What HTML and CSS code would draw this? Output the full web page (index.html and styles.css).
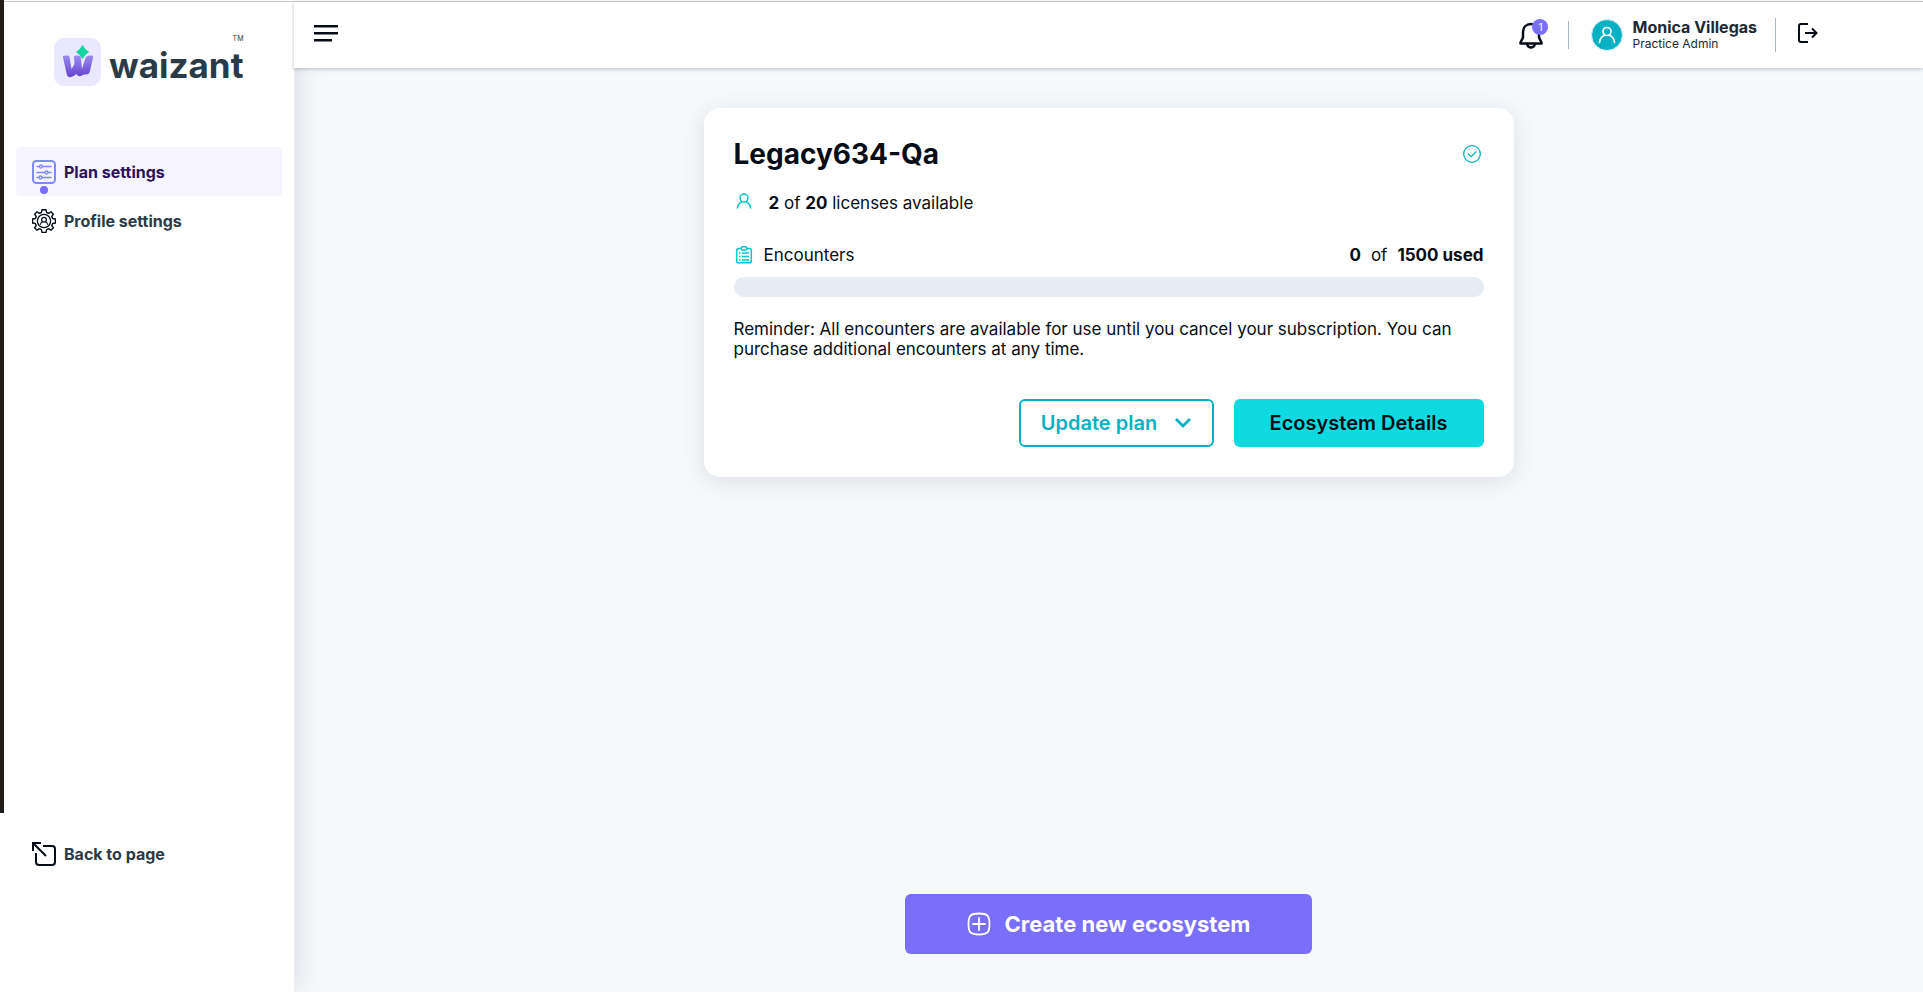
FILE: index.html
```html
<!DOCTYPE html>
<html lang="en">
<head>
<meta charset="utf-8">
<meta name="viewport" content="width=device-width, initial-scale=1">
<title>Waizant - Plan settings</title>
<link rel="stylesheet" href="styles.css">
</head>
<body>
<div class="edge"></div>
<div class="app">
  <aside class="sidebar">
    <a class="logo" href="#" aria-label="Waizant home">
      <svg class="logo-mark" viewBox="0 0 47 48" aria-hidden="true">
        <defs><linearGradient id="w" x1="0" y1="0" x2="0" y2="1"><stop offset="0" stop-color="#9b8af0"/><stop offset="1" stop-color="#6543cf"/></linearGradient></defs>
        <rect width="47" height="48" rx="10" fill="#e9e8ff"/>
        <path d="M9 19.500Q8.500 17.800 10 17.800L14 17.500Q15.300 17.500 15.500 19L17.500 31L20.500 26L20 19Q20.200 17.500 22 17.500L25 17.500Q26.500 17.500 26.700 19L28 31L31.500 20Q32.500 17.500 35 17.500L38 17.500Q39.500 17.500 39 19.500L36 33Q35 37 31.500 36.500Q29.500 36 28 37.500Q24 39.500 22.500 36Q18 40 15 39Q13 38.500 12.500 35Z" fill="url(#w)"/>
        <path d="M28.500 7.500Q30.500 12 34.500 14Q30.500 16 28.500 20.500Q26.500 16 22.500 14Q26.500 12 28.500 7.500Z" fill="#14d5a4" stroke="#14d5a4" stroke-width="1"/>
      </svg>
      <span class="wordmark">waizant</span>
      <span class="tm">TM</span>
    </a>
    <nav class="nav">
      <a class="nav-item active" href="#">
        <span class="nav-icon">
          <svg viewBox="0 0 24 24" fill="none" stroke="#7c8cff" aria-hidden="true">
            <rect x="1" y="1" width="22" height="22" rx="3.500" stroke-width="2"/>
            <path d="M5 6.500H7.500M10.500 6.500H19M5 12.500H13M16 12.500H19M5 17.500H7M10 17.500H19" stroke-width="1.500" stroke-linecap="round"/>
            <circle cx="9" cy="6.500" r="1.500" stroke-width="1.300"/><circle cx="14.500" cy="12.500" r="1.500" stroke-width="1.300"/><circle cx="8.500" cy="17.500" r="1.500" stroke-width="1.300"/>
          </svg>
          <span class="nav-dot"></span>
        </span>
        Plan settings
      </a>
      <a class="nav-item" href="#">
        <span class="nav-icon">
          <svg viewBox="0 0 24 24" fill="none" stroke="#060d17" aria-hidden="true">
            <path d="M10 .7H14L14.600 3.500L16.700 4.400L19 2.800L21.400 5.200L19.800 7.500L20.600 9.500L23.400 10V14L20.600 14.500L19.800 16.500L21.400 18.800L19 21.200L16.700 19.700L14.600 20.600L14 23.400H10L9.400 20.600L7.300 19.700L5 21.200L2.600 18.800L4.200 16.500L3.400 14.500L.6 14V10L3.400 9.500L4.200 7.500L2.600 5.200L5 2.800L7.300 4.400L9.400 3.500Z" stroke-width="1.400" stroke-linejoin="round"/>
            <circle cx="12" cy="12" r="6.600" stroke-width="1.300"/>
            <circle cx="12" cy="10.700" r="2.400" stroke-width="1.200"/><path d="M8.400 15.800Q8.600 13.400 10.600 12.800M15.600 15.800Q15.400 13.400 13.400 12.800" stroke-width="1.200"/>
          </svg>
        </span>
        Profile settings
      </a>
    </nav>
    <a class="nav-item back" href="#">
      <span class="nav-icon">
        <svg viewBox="0 0 24 24" fill="none" stroke="#060d17" stroke-width="2" aria-hidden="true">
          <path d="M1 9V1H9M1 1L14 14"/>
          <path d="M11 4H20Q23 4 23 7V20Q23 23 20 23H7Q4 23 4 20V11"/>
        </svg>
      </span>
      Back to page
    </a>
  </aside>

  <div class="content">
    <header class="topbar">
      <button class="icon-button raised" type="button" aria-label="Toggle menu">
        <svg class="menu-icon" viewBox="0 0 24 17" fill="#060d17" aria-hidden="true"><path d="M0 0H24V2.600H0ZM0 7H24V9.600H0ZM0 14H18V16.600H0Z"/></svg>
      </button>
      <div class="account">
        <button class="icon-button bell" type="button" aria-label="Notifications, 1 new">
          <svg viewBox="0 0 24 27" fill="none" stroke="#060d17" stroke-width="2.500" stroke-linejoin="round" aria-hidden="true">
            <path d="M12 2C7 2 4 5.500 4 10V15.500L1.500 20.500V21.500H22.500V20.500L20 15.500V10C20 5.500 17 2 12 2Z"/><path d="M8 22Q9 25.500 12 25.500Q15 25.500 16 22"/>
          </svg>
          <span class="badge">1</span>
        </button>
        <span class="divider"></span>
        <span class="avatar">
          <svg viewBox="0 0 18 18" fill="none" stroke="#fff" stroke-width="1.700" stroke-linecap="round" aria-hidden="true"><circle cx="9" cy="5.500" r="4"/><path d="M1.500 16.500Q2 11 6.500 9.200M16.500 16.500Q16 11 11.500 9.200"/></svg>
        </span>
        <div class="user"><span class="user-name">Monica Villegas</span><span class="user-role">Practice Admin</span></div>
        <span class="divider tall"></span>
        <button class="icon-button raised" type="button" aria-label="Log out">
          <svg class="logout-icon" viewBox="0 0 20 20" fill="none" stroke="#060d17" stroke-width="2" aria-hidden="true"><path d="M10 1H3Q1 1 1 3V17Q1 19 3 19H10M7 10H18.500M14 5.500L18.500 10L14 14.500"/></svg>
        </button>
      </div>
    </header>

    <main class="main">
      <section class="card">
        <div class="card-head">
          <h1>Legacy634-Qa</h1>
          <svg class="check" viewBox="0 0 18 18" fill="none" stroke="#07b0c2" stroke-width="1.300" aria-hidden="true"><circle cx="9" cy="9" r="8.300"/><path d="M5.300 9L8.200 11.700L13 6.700" stroke-linecap="round"/></svg>
        </div>
        <p class="licenses">
          <svg viewBox="0 0 20 20" fill="none" stroke="#05c6d0" stroke-width="1.500" stroke-linecap="round" aria-hidden="true"><circle cx="10" cy="5" r="4"/><path d="M3.500 15Q4 10.500 7.800 8.700M16.500 15Q16 10.500 12.200 8.700"/></svg>
          <span><b>2</b> of <b>20</b> licenses available</span>
        </p>
        <div class="encounters">
          <svg viewBox="0 0 20 20" fill="none" stroke="#05c6d0" stroke-width="1.500" aria-hidden="true"><path d="M7 3.500H4.500Q2.700 3.500 2.700 5.300V16Q2.700 17.800 4.500 17.800H15.500Q17.300 17.800 17.300 16V5.300Q17.300 3.500 15.500 3.500H13"/><path d="M7.300 2.800Q7.300 1.700 8.500 1.700H11.500Q12.700 1.700 12.700 2.800V3.700Q12.700 5 11.500 5H8.500Q7.300 5 7.300 3.700Z"/><path d="M5 8H6.500M8 8H15M5 11.500H6.500M8 11.500H15M5 15H6.500M8 15H15" stroke-width="1.300"/></svg>
          <span>Encounters</span>
          <span class="usage"><b>0</b><span>of</span><b>1500 used</b></span>
        </div>
        <div class="bar" role="progressbar" aria-label="Encounters used" aria-valuemin="0" aria-valuemax="1500" aria-valuenow="0"></div>
        <p class="reminder">Reminder: All encounters are available for use until you cancel your subscription. You can purchase additional encounters at any time.</p>
        <div class="actions">
          <button class="button outline" type="button">Update plan
            <svg viewBox="0 0 16 10" fill="none" stroke="#07b0c2" stroke-width="2.800" aria-hidden="true"><path d="M1 1L8 8L15 1"/></svg>
          </button>
          <button class="button solid" type="button">Ecosystem Details</button>
        </div>
      </section>
      <button class="create" type="button">
        <svg viewBox="0 0 24 24" fill="none" stroke="#fff" stroke-width="1.800" stroke-linecap="round" aria-hidden="true"><path d="M12 1.500C20.500 1.500 22.500 3.500 22.500 12S20.500 22.500 12 22.500S1.500 20.500 1.500 12S3.500 1.500 12 1.500ZM12 6V18M6 12H18"/></svg>
        Create new ecosystem
      </button>
    </main>
  </div>
</div>
</body>
</html>
```
FILE: styles.css
```css
* { box-sizing: border-box; }

body {
  display: flex;
  min-height: 100vh;
  margin: 0;
  background: #fff;
  color: #060d17;
  font-family: Inter, "Liberation Sans", sans-serif;
  font-size: 17px;
}

h1, p { margin: 0; }
a { color: inherit; text-decoration: none; }
button { font: inherit; color: inherit; cursor: pointer; }
svg { display: block; flex: none; }
b { font-weight: 700; }

.edge { width: 4px; height: 82vh; flex: none; background: #1f1c19; }

.app {
  display: flex;
  flex: 1;
  min-width: 0;
  margin-top: 1px;
  border-top: 1px solid #c8cacb;
}

.sidebar {
  display: flex;
  flex-direction: column;
  flex: none;
  width: 290px;
  padding: 36px 12px 114px;
  background: #fff;
  box-shadow: 0 0 30px rgba(6, 13, 23, 0.13);
  clip-path: inset(0 -40px 0 0);
  z-index: 1;
}

.logo {
  display: flex;
  align-items: center;
  position: relative;
  align-self: flex-start;
  gap: 8px;
  margin: 0 38px 61px;
  color: #2b3a47;
}
.logo-mark { width: 47px; height: 48px; }
.wordmark { padding-top: 6px; font-size: 35px; font-weight: 700; line-height: 42px; }
.tm { position: absolute; top: -3px; right: 0; font-size: 7px; line-height: 8px; }

.nav-item {
  display: flex;
  align-items: center;
  gap: 8px;
  height: 49px;
  padding: 0 16px;
  border-radius: 4px;
  color: #2b3a47;
  font-size: 16px;
  font-weight: 700;
}
.nav-item.active { background: #f6f4ff; color: #2b1259; }
.nav-icon { position: relative; width: 24px; height: 24px; }
.nav-dot {
  position: absolute;
  top: 26px;
  left: 8px;
  width: 8px;
  height: 8px;
  border-radius: 50%;
  background: #7a6ffc;
}
.back { margin-top: auto; }

.content { display: flex; flex-direction: column; flex: 1; min-width: 0; background: #f5f9fc; }

.topbar {
  display: flex;
  align-items: center;
  justify-content: space-between;
  position: relative;
  z-index: 2;
  height: 66px;
  padding: 0 105px 0 20px;
  background: #fff;
  box-shadow: 0 1px 4px rgba(6, 13, 23, 0.25);
}
.icon-button { padding: 0; border: 0; background: none; }
.icon-button.raised { padding-bottom: 4px; }
.menu-icon { width: 24px; height: 17px; }
.logout-icon { width: 20px; height: 20px; }

.account { display: flex; align-items: center; }
.bell { position: relative; }
.bell svg { width: 24px; height: 27px; }
.badge {
  position: absolute;
  top: -3px;
  right: -5px;
  width: 16px;
  height: 16px;
  border-radius: 50%;
  background: #7a6ffc;
  color: #fff;
  font-size: 10px;
  line-height: 16px;
  text-align: center;
}
.divider { width: 1px; height: 28px; margin: 0 22px 0 25px; background: #a9b8c3; }
.divider.tall { height: 34px; margin: 0 22px 0 18px; }
.avatar {
  display: grid;
  place-items: center;
  width: 32px;
  height: 32px;
  margin-right: 9px;
  border: 1px solid #e5edf3;
  border-radius: 50%;
  background: #07b0c2;
}
.avatar svg { width: 18px; height: 18px; }
.user { display: flex; flex-direction: column; color: #1c2935; }
.user-name { font-size: 16px; font-weight: 700; line-height: 18px; }
.user-role { font-size: 12px; line-height: 16px; }

.main {
  display: flex;
  flex-direction: column;
  align-items: center;
  justify-content: space-between;
  flex: 1;
  padding: 40px 20px 38px;
}

.card {
  width: 100%;
  max-width: 810px;
  padding: 30px;
  border-radius: 16px;
  background: #fff;
  box-shadow: 0 4px 24px rgba(6, 13, 23, 0.1);
}
.card-head {
  display: flex;
  align-items: center;
  justify-content: space-between;
  padding-right: 3px;
}
.card-head h1 { font-size: 28px; font-weight: 700; line-height: 32px; }
.check { width: 18px; height: 18px; }
.licenses { display: flex; align-items: center; gap: 15px; margin-top: 21px; line-height: 24px; }
.licenses svg, .encounters svg { width: 20px; height: 20px; }
.encounters { display: flex; align-items: center; gap: 10px; margin-top: 28px; line-height: 24px; }
.usage { display: flex; gap: 10px; margin-left: auto; }
.bar { height: 20px; margin-top: 10px; border-radius: 10px; background: #e6edf4; }
.reminder { margin-top: 22px; line-height: 20px; }

.actions { display: flex; flex-wrap: wrap; justify-content: flex-end; gap: 20px; margin-top: 40px; }
.button {
  display: flex;
  align-items: center;
  justify-content: center;
  height: 48px;
  border: 0;
  border-radius: 6px;
  font-size: 20px;
  font-weight: 600;
}
.button svg { width: 16px; height: 10px; }
.outline { gap: 18px; width: 195px; border: 2px solid #07b0c2; background: #fff; color: #07b0c2; }
.solid { width: 250px; background: #0ddae0; }

.create {
  display: flex;
  align-items: center;
  justify-content: center;
  gap: 14px;
  width: 100%;
  max-width: 407px;
  height: 60px;
  border: 0;
  border-radius: 6px;
  background: #7a6ffc;
  color: #fff;
  font-size: 22px;
  font-weight: 700;
}
.create svg { width: 24px; height: 24px; }
```
